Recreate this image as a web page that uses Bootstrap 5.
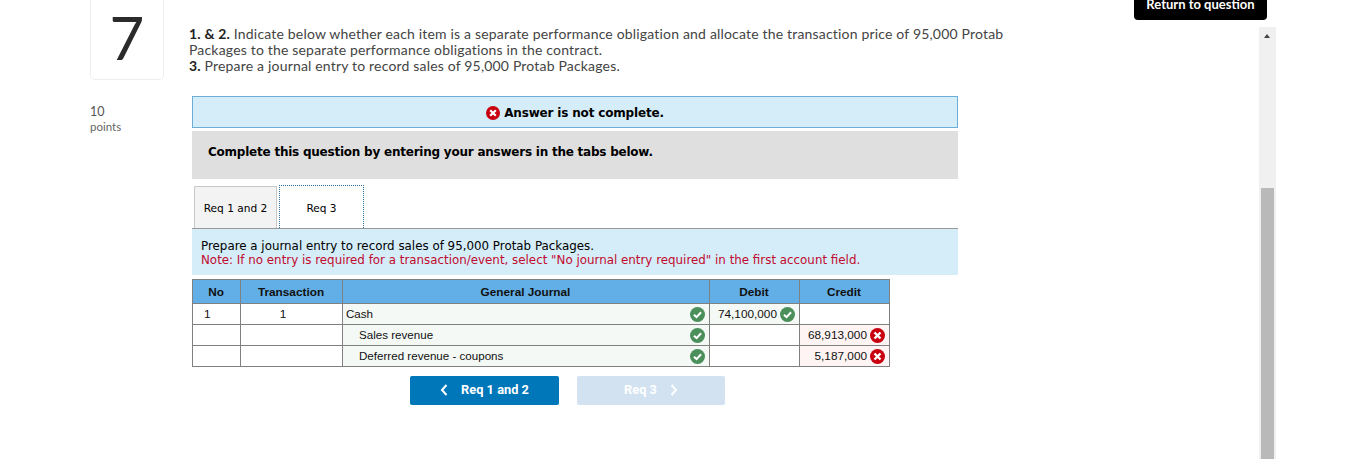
<!DOCTYPE html>
<html lang="en">
<head>
  <meta charset="UTF-8" />
  <meta name="viewport" content="width=device-width, initial-scale=1" />
  <title>Question 7</title>
  <link href="https://cdn.jsdelivr.net/npm/bootstrap@5.3.3/dist/css/bootstrap.min.css" rel="stylesheet" />
  <style>
    html, body { height: 459px; overflow: hidden; }
    body { background: #fff; color: #333; font-family: "Lato", sans-serif; }
    .page-wrap { padding-left: 90px; }
    .left-col { width: 99px; flex: none; }
    .num-box { width: 74px; height: 80px; border: 1px solid #eee; border-top: 0; border-radius: 0 0 5px 5px; font-size: 60px; line-height: 74px; text-align: center; color: #2b2b2b; }
    .points-box { margin-top: 24px; font-size: 12.5px; line-height: 15px; color: #555; }
    .points-box small { display: block; font-size: 11.5px; color: #666; line-height: 15px; }
    .main-col { padding-top: 26px; }
    .q-text { font-size: 14px; line-height: 16px; color: #444; width: 822px; letter-spacing: .18px; margin-bottom: 0; }
    .q-text b { color: #222; }
    .answer-wrap { width: 766px; margin: 22px 0 0 3px; font-family: "DejaVu Sans", sans-serif; color: #000; font-size: 12px; }
    .warn-bar { height: 32px; background: #d5edf9; border: 1px solid #6baed9; font-weight: 700; font-size: 12px; letter-spacing: -.17px; padding-top: 1px; }
    .grey-bar { height: 48px; margin-top: 3px; background: #dfdfdf; padding: 0 0 6px 16px; font-weight: 700; font-size: 12px; letter-spacing: -.23px; }
    .tabs-row { margin-top: 7px; height: 43px; border-bottom: 1px solid #999; padding-left: 2px; gap: 2px; }
    .tab-item { height: 42px; width: 83px; padding-top: 3px; border: 1px solid #c8c8c8; border-bottom: 0; background: #f3f3f3; font-size: 10.6px; }
    .tab-item.on { width: 85px; padding-top: 3px; background: #fff; border: 1px dotted #2a6f9e; border-bottom: 0; height: 43px; margin-top: -1px; margin-bottom: -1px; }
    .note-box { height: 46px; background: #d5edf9; padding: 10px 9px 0; font-size: 11.87px; line-height: 14px; }
    .note-box span { color: #c10a2e; display: block; }
    .jrnl { width: 698px; margin-top: 4px; border-collapse: collapse; table-layout: fixed; font-family: "Liberation Sans", sans-serif; font-size: 11.8px; color: #111; }
    .jrnl th, .jrnl td { border: 1px solid #808080; padding: 0 4px 0 3px; height: 21px; line-height: 14px; }
    .jrnl th { background: #62aee6; height: 24px; text-align: center; font-weight: 700; }
    .jrnl .gj { background: #f4f9f5; font-size: 11.6px; }
    .jrnl .okc { background: #f4f9f5; }
    .jrnl .bad { background: #fdf4f3; }
    .jrnl .ind { padding-left: 16px; }
    .jrnl .no-cell { padding-left: 11px; }
    .jrnl .tr-cell { padding-right: 20px; text-align: center; }
    .jrnl svg { width: 15px; height: 15px; flex: none; }
    .amt-wrap { gap: 3px; }
    .nav-row { width: 698px; margin-top: 9px; padding-left: 218px; gap: 18px; }
    .step-btn { width: 149px; height: 29px; padding: 0 0 2px; border: 0; border-radius: 2px; font-family: "Roboto", sans-serif; font-weight: 700; font-size: 12.8px; color: #fff; background: #0077b9; gap: 13px; }
    .step-btn:disabled { width: 148px; background: #d2e2f1; color: #fff; opacity: 1; }
    .step-btn svg { width: 8px; height: 12px; }
    .ret-btn { position: absolute; top: 0; left: 1134px; width: 133px; height: 20px; background: #000; color: #fff; border-radius: 0 0 4px 4px; font-weight: 700; font-size: 13px; line-height: 8px; text-align: center; }
    .scroll-track { position: absolute; top: 27px; left: 1259px; width: 17px; height: 432px; background: #f0f0f0; }
    .scroll-arrow { position: absolute; top: 7px; left: 5px; border: 3.5px solid transparent; border-top: 0; border-bottom: 4px solid #444; }
    .scroll-thumb { position: absolute; top: 161px; left: 2px; width: 13px; height: 271px; background: #b9b9b9; }
  </style>
</head>
<body>
  <svg width="0" height="0" class="position-absolute">
    <symbol id="ic-ok" viewBox="0 0 16 16">
      <circle cx="8" cy="8" r="8" fill="#4b8f5b" />
      <path d="M4.2 8.2 7 10.8 11.8 5.6" fill="none" stroke="#fff" stroke-width="2.2" />
    </symbol>
    <symbol id="ic-bad" viewBox="0 0 16 16">
      <circle cx="8" cy="8" r="8" fill="#c8000f" />
      <path d="M4.8 4.8 11.2 11.2M11.2 4.8 4.8 11.2" fill="none" stroke="#fff" stroke-width="2.6" />
    </symbol>
  </svg>

  <div class="d-flex page-wrap">
    <div class="left-col">
      <div class="num-box">7</div>
      <div class="points-box">10<small>points</small></div>
    </div>
    <div class="main-col">
      <p class="q-text"><b>1. &amp; 2.</b> Indicate below whether each item is a separate performance obligation and allocate the transaction price of 95,000 Protab Packages to the separate performance obligations in the contract.<br /><b>3.</b> Prepare a journal entry to record sales of 95,000 Protab Packages.</p>

      <div class="answer-wrap">
        <div class="warn-bar d-flex align-items-center justify-content-center gap-1">
          <svg width="14" height="14"><use href="#ic-bad" /></svg>
          Answer is not complete.
        </div>
        <div class="grey-bar d-flex align-items-center">Complete this question by entering your answers in the tabs below.</div>

        <div class="tabs-row d-flex">
          <div class="tab-item d-flex align-items-center justify-content-center">Req 1 and 2</div>
          <div class="tab-item on d-flex align-items-center justify-content-center">Req 3</div>
        </div>

        <div class="note-box">Prepare a journal entry to record sales of 95,000 Protab Packages.
          <span>Note: If no entry is required for a transaction/event, select "No journal entry required" in the first account field.</span>
        </div>

        <table class="jrnl">
          <colgroup>
            <col style="width:48px" /><col style="width:102px" /><col style="width:367px" /><col style="width:90px" /><col style="width:90px" />
          </colgroup>
          <thead>
            <tr><th>No</th><th>Transaction</th><th>General Journal</th><th>Debit</th><th>Credit</th></tr>
          </thead>
          <tbody>
            <tr>
              <td class="no-cell">1</td>
              <td class="tr-cell">1</td>
              <td class="gj"><div class="d-flex justify-content-between align-items-center">Cash<svg><use href="#ic-ok" /></svg></div></td>
              <td class="okc"><div class="d-flex justify-content-end align-items-center amt-wrap">74,100,000<svg><use href="#ic-ok" /></svg></div></td>
              <td></td>
            </tr>
            <tr>
              <td></td>
              <td></td>
              <td class="gj ind"><div class="d-flex justify-content-between align-items-center">Sales revenue<svg><use href="#ic-ok" /></svg></div></td>
              <td></td>
              <td class="bad"><div class="d-flex justify-content-end align-items-center amt-wrap">68,913,000<svg><use href="#ic-bad" /></svg></div></td>
            </tr>
            <tr>
              <td></td>
              <td></td>
              <td class="gj ind"><div class="d-flex justify-content-between align-items-center">Deferred revenue - coupons<svg><use href="#ic-ok" /></svg></div></td>
              <td></td>
              <td class="bad"><div class="d-flex justify-content-end align-items-center amt-wrap">5,187,000<svg><use href="#ic-bad" /></svg></div></td>
            </tr>
          </tbody>
        </table>

        <div class="nav-row d-flex">
          <button type="button" class="btn step-btn d-flex align-items-center justify-content-center">
            <svg viewBox="0 0 8 12"><path d="M6.5 1 2 6l4.5 5" fill="none" stroke="#fff" stroke-width="2" /></svg>
            Req 1 and 2
          </button>
          <button type="button" class="btn step-btn d-flex align-items-center justify-content-center" disabled>
            Req 3
            <svg viewBox="0 0 8 12"><path d="M1.5 1 6 6l-4.5 5" fill="none" stroke="#fff" stroke-width="2" /></svg>
          </button>
        </div>
      </div>
    </div>
  </div>

  <div class="ret-btn">Return to question</div>
  <div class="scroll-track">
    <div class="scroll-arrow"></div>
    <div class="scroll-thumb"></div>
  </div>
</body>
</html>
